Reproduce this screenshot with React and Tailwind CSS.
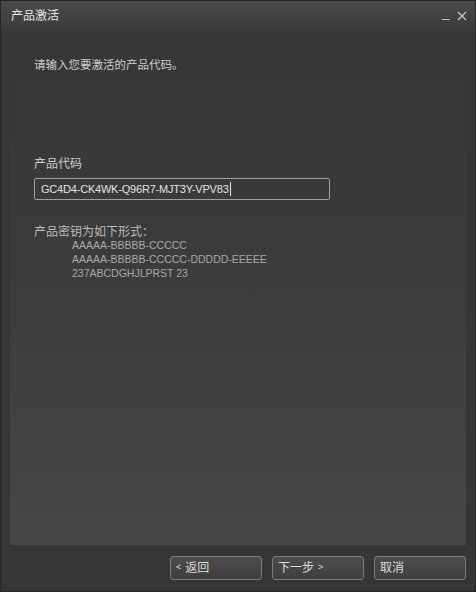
const sans = "font-['Liberation_Sans','Noto_Sans_CJK_SC',sans-serif]";

function WinButton({ children }) {
  return (
    <button className="flex h-[24px] w-[92px] items-center rounded-[3px] border border-[#7c7c7c] bg-gradient-to-b from-[#4d4d4d] to-[#3f3f3f] px-[5px] text-[12px] text-[#dcdcdc]">
      {children}
    </button>
  );
}

export default function App() {
  return (
    <div className={`flex h-[592px] w-[476px] flex-col border border-[#262626] bg-[#363636] ${sans}`}>
      {/* title bar */}
      <div className="flex h-[30px] items-center justify-between bg-gradient-to-b from-[#4b4b4b] to-[#393939] pl-[10px] pr-[8px]">
        <span className="text-[12px] text-[#e6e6e6]">产品激活</span>
        <div className="flex items-end gap-[7px] text-[#bdbdbd]">
          <span className="mb-[1px] h-[1px] w-[8px] bg-[#bdbdbd]" />
          <svg width="10" height="10" viewBox="0 0 10 10" stroke="#c8c8c8" strokeWidth="1.3">
            <path d="M1 1L9 9M9 1L1 9" />
          </svg>
        </div>
      </div>

      {/* content panel */}
      <div className="mx-[9px] flex h-[514px] flex-col bg-gradient-to-b from-[#363636] via-[#3c3c3c] to-[#474747] px-[24px] text-[12px]">
        <p className="mt-[26px] text-[11.5px] text-[#cfcfcf]">请输入您要激活的产品代码。</p>

        <p className="mt-[81px] text-[#cfcfcf]">产品代码</p>
        <div className="mt-[5px] flex h-[22px] w-[296px] items-center rounded-[2px] border border-[#a0a0a0] bg-[#3a3a3a] px-[6px] text-[11px] tracking-[-0.2px] text-[#e2e2e2]">
          GC4D4-CK4WK-Q96R7-MJT3Y-VPV83
          <span className="ml-[1px] h-[14px] w-[1px] bg-[#e8e8e8]" />
        </div>

        <p className="mt-[26px] leading-[12px] text-[#bdbdbd]">产品密钥为如下形式：</p>
        <div className="ml-[38px] flex flex-col text-[10.5px] leading-[14px] text-[#a9a9a9]">
          <span>AAAAA-BBBBB-CCCCC</span>
          <span>AAAAA-BBBBB-CCCCC-DDDDD-EEEEE</span>
          <span>237ABCDGHJLPRST 23</span>
        </div>
      </div>

      {/* footer buttons */}
      <div className="flex flex-1 items-center justify-end gap-[10px] pr-[9px] pb-[1px]">
        <WinButton>
          <span className="mr-[4px] text-[9px]">&lt;</span>返回
        </WinButton>
        <WinButton>
          下一步<span className="ml-[4px] text-[9px]">&gt;</span>
        </WinButton>
        <WinButton>取消</WinButton>
      </div>
    </div>
  );
}
